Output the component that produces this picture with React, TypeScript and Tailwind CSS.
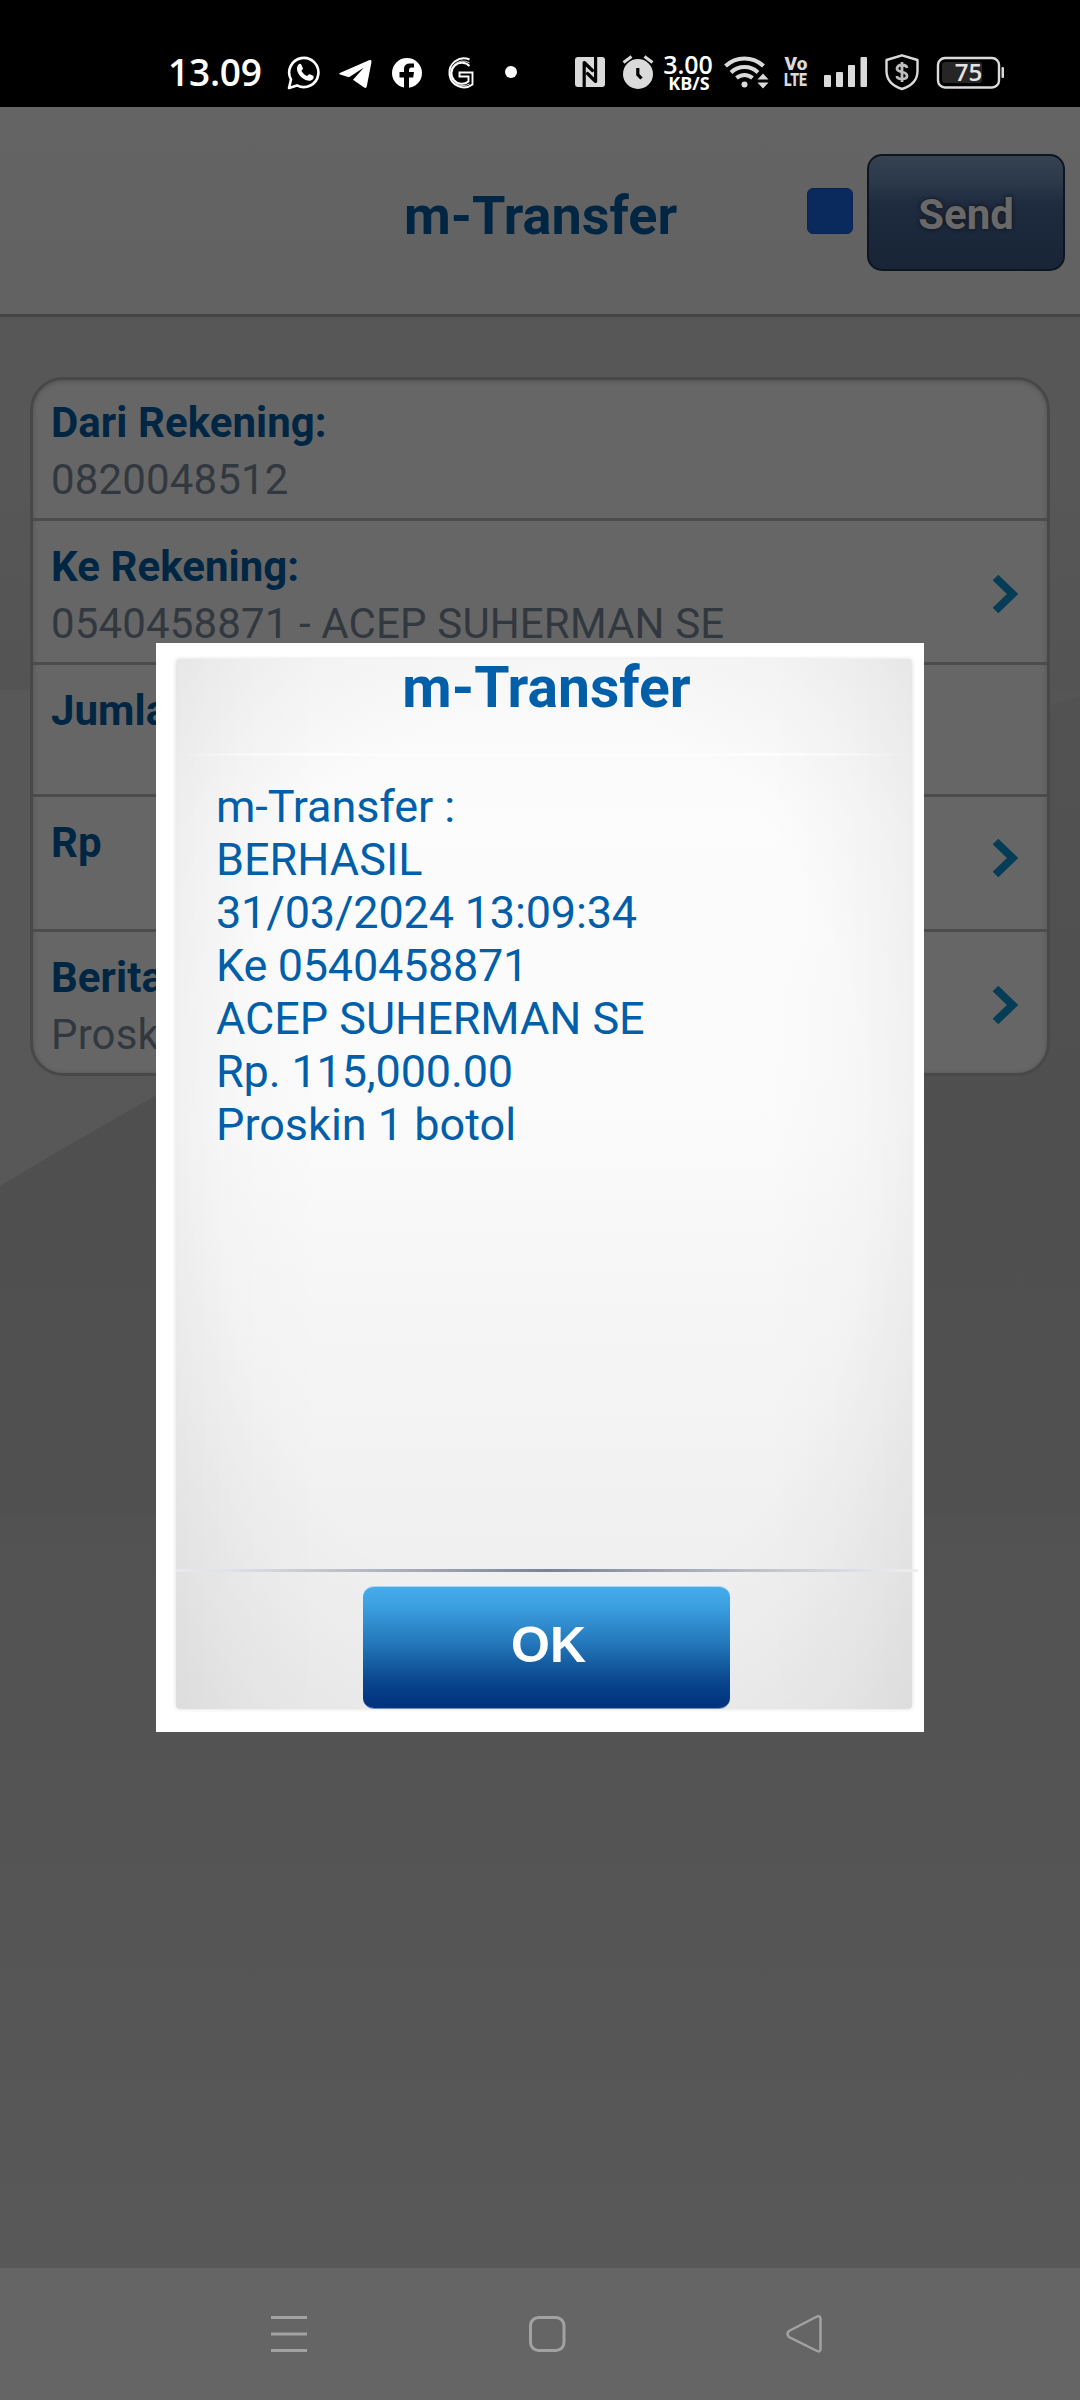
import React from "react";

function StatusBar() {
  return (
    <header className="relative z-10 flex h-[107px] w-full items-start bg-black pl-[168px] pt-[46px] text-white">
      <div className="w-[119px] font-['Open_Sans','Noto_Sans',sans-serif] text-[37px] font-semibold leading-[52px] tracking-[-0.2px]">13.09</div>
      <svg className="h-[50px] w-[240px]" viewBox="287 46 240 50" fill="none">
        <path d="M289 88 L291 79.5 A14.6 14.6 0 1 1 297 85.4 Z" stroke="#fff" strokeWidth="2.6" strokeLinejoin="round" />
        <path d="M298.5 64.5c1.2-1.2 2.5-.8 3 .4l1.3 3c.4 1-.2 1.6-1.4 2.8 1.4 2.6 3.2 4.3 5.8 5.4 1.3-1.5 1.8-2.2 2.8-1.8l3 1.5c1 .5.8 2.2 0 3.3-2.2 2.8-6.8 2.2-11-1.3-4.7-3.9-6.6-9.8-3.5-13.3Z" fill="#fff" />
        <path d="M339.8 73 L369 60.3 Q372 59.4 371.4 62.4 L366.8 86.3 Q366.2 89 363.8 87.3 L353 79.7 L364 67.5 L349 77.3 L340 74.5 Q338.4 73.7 339.8 73Z" fill="#fff" />
        <circle cx="407" cy="73" r="15" fill="#fff" />
        <path d="M404 89V77.5H399.5V72H404V69Q404 63.5 410 63.5H414V67.5H411.5Q409 67.5 409 70V72H414L413.2 77.5H409V89Z" fill="#000" />
        <path d="M469.500 59.500A14.500 14.500 0 1 0 472.500 84.500V72.500H459.500V76.500H468.500V81.500A10.500 10.500 0 1 1 469.500 66" stroke="#fff" strokeWidth="1.9" />
        <path d="M469.500 62.800A12.400 12.400 0 1 0 469.500 84" stroke="#fff" strokeWidth="0.900" />
        <circle cx="511" cy="72" r="6" fill="#fff" />
      </svg>
      <svg className="ml-[48px] h-[50px] w-[80px]" viewBox="575 46 80 50">
        <rect x="575" y="57" width="30" height="30" rx="3" fill="#dadada" />
        <path d="M584.2 88V62.5L592.5 70.5M595.6 56V81.5L587.5 73.5" fill="none" stroke="#000" strokeWidth="3.2" strokeLinejoin="round" strokeLinecap="round" />
        <circle cx="638" cy="74" r="15" fill="#dadada" />
        <path d="M623.5 62.5L631.5 56.5M652.5 62.5L644.5 56.5" stroke="#dadada" strokeWidth="3" />
        <path d="M637.8 68V74.5L641.5 78.5" fill="none" stroke="#000" strokeWidth="3.2" />
      </svg>
      <div className="ml-[4px] flex w-[58px] flex-col items-center pt-[7px] font-['Open_Sans',sans-serif]">
        <span className="text-[25px] font-semibold leading-[23px]">3.00</span>
        <span className="pl-[2px] text-[18px] font-bold leading-[15px]">KB/S</span>
      </div>
      <svg className="ml-[6px] h-[50px] w-[50px]" viewBox="723 46 50 50" fill="none" stroke="#dadada" strokeWidth="4">
        <path d="M725.5 66A27.5 27.5 0 0 1 763.5 66M731 72.5A19.5 19.5 0 0 1 758 72.5M736.5 78A12 12 0 0 1 752.5 78" />
        <circle cx="744.5" cy="84.5" r="3" fill="#dadada" stroke="none" />
        <path d="M757.5 79.5L763 73.5L768.5 79.5ZM757.5 82.5L763 88.5L768.5 82.5Z" fill="#dadada" stroke="none" />
      </svg>
      <div className="ml-[7px] flex w-[32px] flex-col items-center pt-[10px] font-['Roboto',sans-serif] font-black text-[#dadada]">
        <span className="text-[19px] leading-[16px]">Vo</span>
        <span className="origin-center scale-x-[.74] text-[19px] leading-[16px]">LTE</span>
      </div>
      <svg className="ml-[12px] h-[50px] w-[184px]" viewBox="824 46 184 50">
        <g fill="#dadada">
          <rect x="824" y="75" width="7" height="12" rx="1" />
          <rect x="836" y="72" width="7" height="15" rx="1" />
          <rect x="848" y="65" width="7" height="22" rx="1" />
          <rect x="860.5" y="57" width="6.5" height="30" rx="1" />
          <rect x="1001.5" y="67" width="2.5" height="11" rx="1" />
        </g>
        <path d="M902 55.3L917.5 60V71Q917.5 84 902 89Q886.5 84 886.5 71V60Z" fill="none" stroke="#dadada" strokeWidth="2.4" strokeLinejoin="round" />
        <path d="M907 68Q906.5 65 902 65T897 68.5Q897 71 902 72T907 76Q907 79 902 79T897 76M902 62V82" fill="none" stroke="#bdbdbd" strokeWidth="2.8" />
        <rect x="938" y="58" width="61" height="29.5" rx="7" fill="none" stroke="#dadada" strokeWidth="2.4" />
        <rect x="942" y="62" width="40" height="21" rx="3" fill="#262626" />
        <text x="968.5" y="81" textAnchor="middle" fontFamily="Open Sans, sans-serif" fontSize="24" fontWeight="600" fill="#e4e4e4">75</text>
      </svg>
    </header>
  );
}

function Chevron() {
  return (
    <svg className="h-[42px] w-[30px] shrink-0" viewBox="0 0 30 42" fill="none">
      <path d="M4.5 4.5L21.5 21L4.5 37.5" stroke="#053c56" strokeWidth="8" />
    </svg>
  );
}

type RowProps = {
  label: string;
  value?: string;
  className: string;
  textClass?: string;
  arrow?: string;
};

function Row({ label, value, className, textClass = "pt-[17px]", arrow }: RowProps) {
  return (
    <div className={`flex w-full items-start justify-between pl-[18px] pr-[26px] ${className}`}>
      <div className={`whitespace-nowrap text-[42px] leading-[57px] ${textClass}`}>
        <div className="font-bold tracking-[0.05px] text-[#002643]">{label}</div>
        {value && <div className="tracking-[0.14px] text-[#32383f]">{value}</div>}
      </div>
      {arrow && (
        <div className={arrow}>
          <Chevron />
        </div>
      )}
    </div>
  );
}

function Dialog() {
  return (
    <section className="absolute left-[156px] top-[643px] flex h-[1089px] w-[768px] flex-col bg-white pl-[20px] pt-[16px] text-[#015ea8]">
      <div className="flex h-[1050px] w-[736px] flex-col rounded-[4px] bg-[radial-gradient(ellipse_80%_78%_at_50%_48%,transparent_55%,rgba(0,0,0,0.055)_100%),linear-gradient(90deg,rgba(0,0,0,0.03)_0%,rgba(0,0,0,0.01)_9%,transparent_20%,transparent_80%,rgba(0,0,0,0.01)_91%,rgba(0,0,0,0.03)_100%),linear-gradient(180deg,#f8f8f8_0%,#fcfcfc_15%,#fafafa_45%,#f1f1f1_80%,#eeeeee_100%)] shadow-[0_0_4px_#ddd]">
        <h2 className="h-[94px] pl-[5px] pt-px text-center text-[57px] font-bold leading-[55px]">m-Transfer</h2>
        <div className="h-[3px] shrink-0 bg-[linear-gradient(90deg,transparent,#fdfdfd_20%,#fdfdfd_80%,transparent)]" />
        <div className="h-[813px] whitespace-nowrap pl-[40px] pt-[24px] text-[45px] leading-[53px]">
          <p className="tracking-[-0.1px]">m-Transfer :</p>
          <p>BERHASIL</p>
          <p className="tracking-[-0.17px]">31/03/2024 13:09:34</p>
          <p className="tracking-[-0.28px]">Ke 0540458871</p>
          <p className="tracking-[-0.05px]">ACEP SUHERMAN SE</p>
          <p className="tracking-[-0.15px]">Rp. 115,000.00</p>
          <p>Proskin 1 botol</p>
        </div>
        <div className="h-[3px] w-[742px] shrink-0 bg-[linear-gradient(90deg,#e9e9eb_0%,#dfe2e8_7%,#b5bac4_25%,#778397_50%,#b5bac4_75%,#dfe2e8_93%,#eee_100%)]" />
        <button className="ml-[187px] mt-[14px] flex h-[123px] w-[367px] items-center justify-center rounded-[11px] border-b border-t border-b-[#6d8fc0] border-t-[#a6d8f6] bg-[linear-gradient(180deg,#45ace9_0%,#3ca2e2_14%,#2275b8_48%,#0b4990_76%,#00347f_96%)] pb-[6px] pl-[4px] font-['Liberation_Sans',Arial,sans-serif] text-[50px] font-bold leading-none text-white">OK</button>
      </div>
    </section>
  );
}

export default function App() {
  return (
    <div className="relative flex h-[2400px] w-[1080px] flex-col overflow-hidden bg-[#505050] font-['Roboto',sans-serif]">
      <StatusBar />
      <div className="flex h-[210px] shrink-0 items-start justify-end border-b-[3px] border-[#444] bg-[linear-gradient(180deg,#646464,#626262)] pr-[15px] pt-[47px]">
        <h1 className="w-[403px] pt-[35px] text-[54px] font-bold leading-[54px] text-[#002643]">m-Transfer</h1>
        <div className="mt-[34px] h-[46px] w-[46px] rounded-[6px] border border-[#0a2350] bg-[#0a2a5e]" />
        <button className="ml-[14px] h-[117px] w-[198px] rounded-[15px] border-2 border-[#0c1622] bg-[linear-gradient(180deg,#364250_0%,#2a384a_25%,#1f2b3f_42%,#1b273a_70%,#192537_100%)] pt-[3px] text-[42px] font-bold text-[#696969] [text-shadow:0_0_4px_#111]">Send</button>
      </div>
      <main className="relative h-[1951px] shrink-0 bg-[linear-gradient(180deg,#575757_0%,#575757_8%,#545454_19%,#515151_42%,#505050_50%,#585858_100%)] pt-[60px]">
        <svg className="absolute left-0 top-0 h-[1200px] w-[1080px]" viewBox="0 317 1080 1200">
          <defs>
            <linearGradient id="swoosh" x1="0" x2="1" y1="0" y2="0">
              <stop offset="0" stopColor="#585858" />
              <stop offset="1" stopColor="#555555" />
            </linearGradient>
            <linearGradient id="shade" x1="0" x2="0" y1="0" y2="1">
              <stop offset="0" stopColor="#525252" />
              <stop offset=".5" stopColor="#4f4f4f" />
              <stop offset="1" stopColor="#505050" />
            </linearGradient>
          </defs>
          <path d="M0 690H1080V696Q560 850 0 1186Z" fill="url(#swoosh)" />
          <path d="M0 1186Q560 850 1080 696V1517H0Z" fill="url(#shade)" />
        </svg>
        <div className="relative ml-[30px] flex h-[699px] w-[1020px] flex-col divide-y-[3px] divide-[#4c4c4c] rounded-[33px] border-[3px] border-[#484848] bg-[#666] shadow-[inset_0_1px_4px_#505050]">
          <Row label="Dari Rekening:" value="0820048512" className="h-[141px]" textClass="pt-[14px]" />
          <Row label="Ke Rekening:" value="0540458871 - ACEP SUHERMAN SE" className="h-[144px]" arrow="pt-[52px]" />
          <Row label="Jumlah:" className="h-[132px]" />
          <Row label="Rp" className="h-[135px]" arrow="pt-[40px]" />
          <Row label="Berita:" value="Proskin 1 botol" className="h-[141px]" arrow="pt-[52px]" />
        </div>
      </main>
      <nav className="flex h-[132px] shrink-0 items-start bg-[#656565] pl-[269px] pt-[46px]">
        <svg className="h-[42px] w-[558px]" viewBox="269 2314 558 42" fill="none" stroke="#a2a2a2" strokeWidth="3">
          <path d="M271 2317.5H307M271 2334H307M271 2350.5H307" />
          <rect x="530.5" y="2317.5" width="33.5" height="33" rx="8" />
          <path d="M789 2331L816 2317Q820.5 2314.8 820.5 2319V2349Q820.5 2353 816 2350.5L789 2337Q786 2334 789 2331Z" strokeWidth="2.5" />
        </svg>
      </nav>
      <Dialog />
    </div>
  );
}
